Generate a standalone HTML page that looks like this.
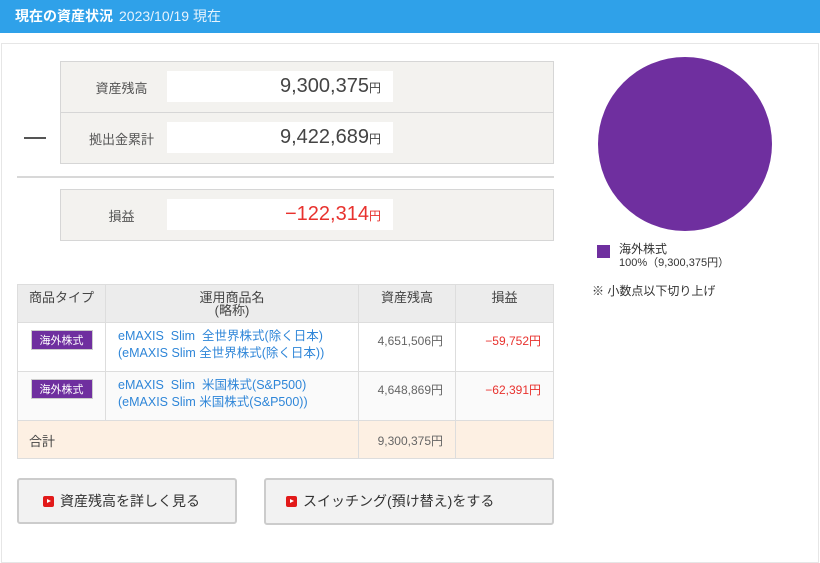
<!DOCTYPE html>
<html><head><meta charset="utf-8"><style>
*{margin:0;padding:0;box-sizing:border-box}
body{width:820px;height:553px;background:#fff;font-family:"Liberation Sans","Noto Sans CJK JP",sans-serif;position:relative;overflow:hidden;color:#333}
.a{position:absolute}
.hdr{left:0;top:0;width:820px;height:33px;background:#2fa1e9;color:#fff;font-size:14px;line-height:33px;padding-left:15px}
.hdr b{font-weight:bold}
.hdr span{font-size:14px;margin-left:6px;color:#e6f3fd}
.panel{left:1px;top:43px;width:818px;height:520px;border:1px solid #e6e6e6}
.box{background:#f3f2ef;border:1px solid #d6d6d6}
.lab{font-size:13px;color:#555;width:107px;text-align:center}
.val{background:#fff;font-size:20px;text-align:right;padding-right:12px;color:#444;line-height:31px}
.val small{font-size:12px}
table{position:absolute;left:17px;top:284px;width:537px;border-collapse:collapse;font-size:12px}
td,th{border:1px solid #ddd;vertical-align:top}
th{background:#ececec;font-weight:normal;color:#444;font-size:13px;height:38px;padding-top:6px;line-height:13px}
.tag{display:inline-block;background:#6f2f9f;color:#fff;font-size:11px;width:62px;height:20px;line-height:20px;text-align:center;border:1px solid #ccc}
.lnk{color:#2f86d8;font-size:12.5px;line-height:17px;padding:5px 0 0 12px}
.num{text-align:right;padding:9px 12px 0 0;color:#666;font-size:12px}
.red{color:#e8322e}
.btn{border:2px solid #ccc;background:#f2f2f2;border-radius:3px;font-size:14px;color:#333;line-height:42px}
.ico{display:inline-block;width:11px;height:11px;background:#e21a1a;border-radius:2px;vertical-align:-1px;margin-right:6px;position:relative}
.ico:after{content:"";position:absolute;left:4px;top:3px;border-left:4px solid #fff;border-top:2.5px solid transparent;border-bottom:2.5px solid transparent}
</style></head><body>
<div class="a hdr"><b>現在の資産状況</b><span>2023/10/19 現在</span></div>
<div class="a panel"></div>
<div class="a box" style="left:60px;top:61px;width:494px;height:52px"></div>
<div class="a box" style="left:60px;top:112px;width:494px;height:52px"></div>
<div class="a lab" style="left:68px;top:78px">資産残高</div>
<div class="a val" style="left:167px;top:71px;width:226px;height:31px">9,300,375<small>円</small></div>
<div class="a lab" style="left:68px;top:129px">拠出金累計</div>
<div class="a val" style="left:167px;top:122px;width:226px;height:31px">9,422,689<small>円</small></div>
<div class="a" style="left:24px;top:137px;width:22px;height:2px;background:#555"></div>
<div class="a" style="left:17px;top:176px;width:537px;height:2px;background:#d8d8d8"></div>
<div class="a box" style="left:60px;top:189px;width:494px;height:52px"></div>
<div class="a lab" style="left:68px;top:206px">損益</div>
<div class="a val red" style="left:167px;top:199px;width:226px;height:31px">−122,314<small>円</small></div>
<table>
<tr><th style="width:88px">商品タイプ</th><th style="width:253px">運用商品名<br>(略称)</th><th style="width:97px">資産残高</th><th>損益</th></tr>
<tr style="height:49px"><td style="text-align:center;padding-top:7px"><span class="tag">海外株式</span></td><td class="lnk">eMAXIS&nbsp; Slim&nbsp; 全世界株式(除く日本)<br>(eMAXIS Slim 全世界株式(除く日本))</td><td class="num">4,651,506円</td><td class="num red">−59,752円</td></tr>
<tr style="height:49px;background:#fafafa"><td style="text-align:center;padding-top:7px"><span class="tag">海外株式</span></td><td class="lnk">eMAXIS&nbsp; Slim&nbsp; 米国株式(S&amp;P500)<br>(eMAXIS Slim 米国株式(S&amp;P500))</td><td class="num">4,648,869円</td><td class="num red">−62,391円</td></tr>
<tr style="height:38px;background:#fdf0e3"><td colspan="2" style="padding:10px 0 0 11px;font-size:13px;color:#444">合計</td><td class="num" style="padding-top:11px">9,300,375円</td><td></td></tr>
</table>
<div class="a btn" style="left:17px;top:478px;width:220px;height:46px;padding-left:24px"><span class="ico"></span>資産残高を詳しく見る</div>
<div class="a btn" style="left:264px;top:478px;width:290px;height:47px;padding-left:20px"><span class="ico"></span>スイッチング(預け替え)をする</div>
<div class="a" style="left:598px;top:57px;width:174px;height:174px;border-radius:50%;background:#6f2f9f"></div>
<div class="a" style="left:597px;top:245px;width:13px;height:13px;background:#6f2f9f"></div>
<div class="a" style="left:619px;top:243px;font-size:12px;line-height:13px;color:#333">海外株式<br><span style="font-size:11px">100%（9,300,375円）</span></div>
<div class="a" style="left:592px;top:282px;font-size:12px;color:#333">※ 小数点以下切り上げ</div>
</body></html>
